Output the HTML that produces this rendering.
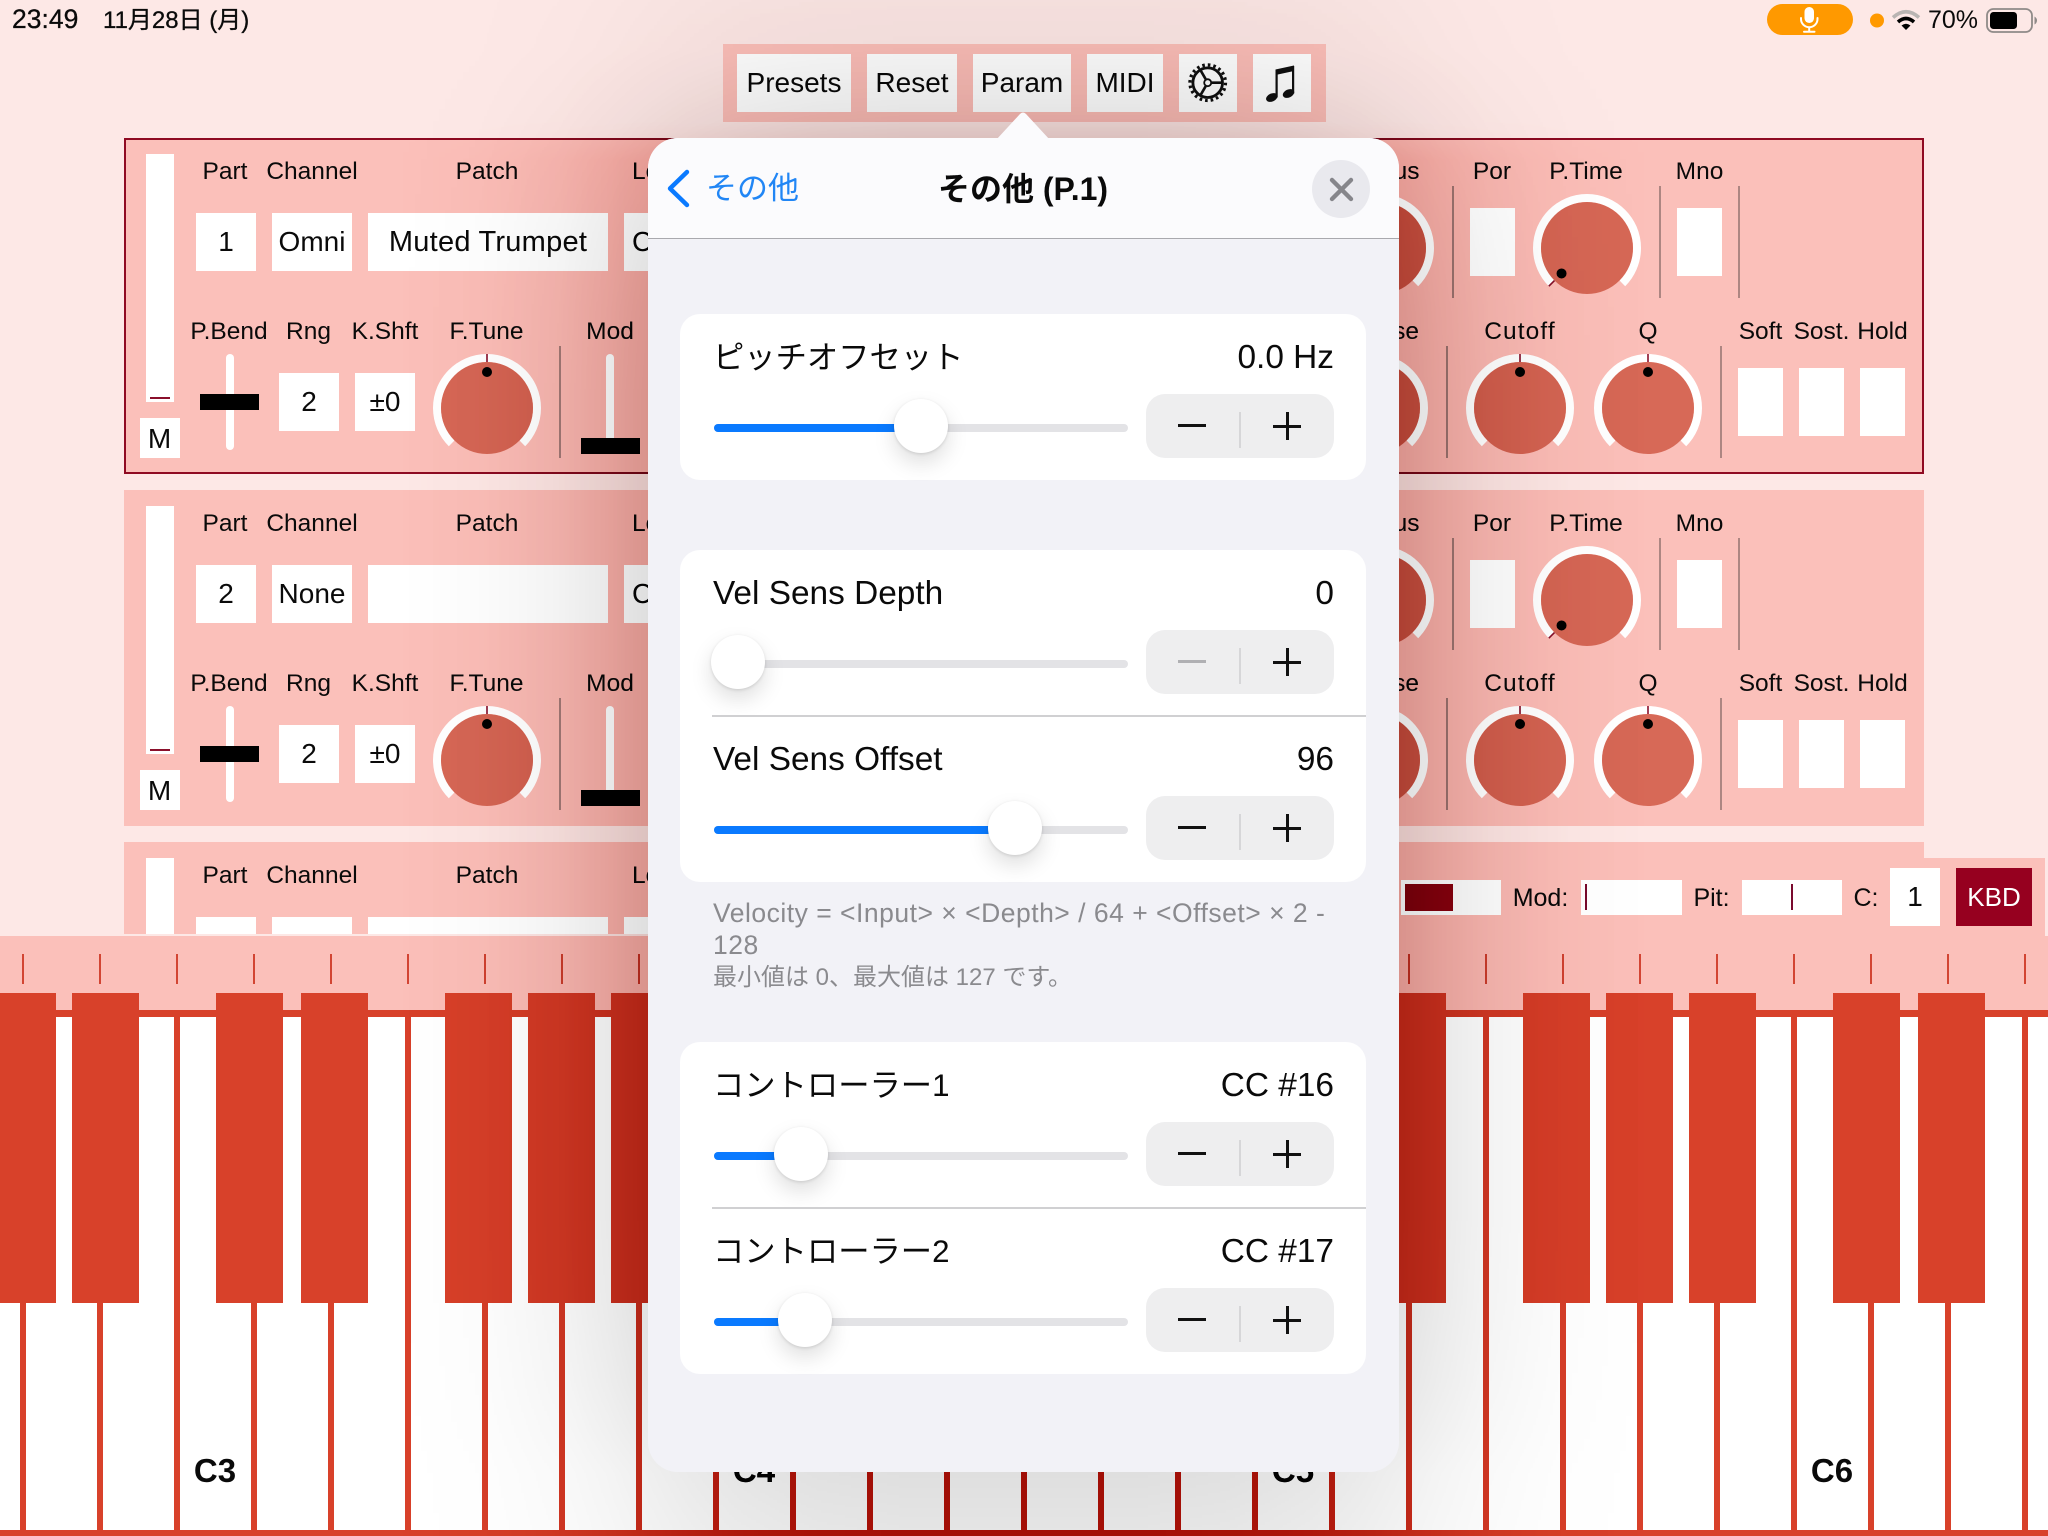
<!DOCTYPE html>
<html lang="ja">
<head>
<meta charset="utf-8">
<title>Param</title>
<style>
html,body{margin:0;padding:0;width:2048px;height:1536px;overflow:hidden;background:#fde8e6}
body{position:relative;font-family:"Liberation Sans","Noto Sans CJK JP",sans-serif;color:#0a0a0a}
div,span,svg{position:absolute;display:block}
.l{font-size:24.5px;line-height:30px;height:30px;white-space:nowrap;transform:translateX(-50%)}
.b{background:#fff;font-size:28px;text-align:center;white-space:nowrap}
.h{background:#fff}
.s{background:#ad8682;width:2px}
.p{left:0;top:0;width:2048px}
.pb{left:124px;top:138px;width:1800px;height:336px;background:#fbc0ba;box-sizing:border-box}
.tb{top:54px;height:58px;line-height:58px;background:#fff;font-size:28px;text-align:center;white-space:nowrap}
.k{top:993px;width:67px;height:310px;background:#d8412a}
.ct{font-size:33.4px;line-height:40px;height:40px;white-space:nowrap;margin-top:1px}
.jp{font-size:31.3px}
.v{right:714px}
.card{left:680px;width:686px;background:#fff;border-radius:20px}
.trk{left:714px;width:414px;height:8px;border-radius:4px;background:#e3e3e6;overflow:hidden}
.fill{left:0;top:0;height:8px;background:#0a7aff}
.th{width:54px;height:54px;border-radius:27px;background:#fff;box-shadow:0 10px 22px rgba(0,0,0,.13),0 1px 3px rgba(0,0,0,.13)}
.st{left:1146px;width:188px;height:64px;border-radius:19px;background:#eeeeef}
.st i{position:absolute;display:block;background:#111}
.d{left:1236px;width:654px}
.f{left:713px;font-size:26.5px;line-height:32px;height:32px;color:#8a8a8e;white-space:nowrap;letter-spacing:.5px}
.sh{left:0;top:0;width:2048px;height:1536px;background:linear-gradient(90deg,rgba(0,0,0,0) 388px,rgba(0,0,0,.06) 478px,rgba(0,0,0,.12) 518px,rgba(0,0,0,.2) 560px,rgba(0,0,0,.35) 608px,rgba(0,0,0,.5) 648px,rgba(0,0,0,.65) 688px,rgba(0,0,0,.8) 736px,rgba(0,0,0,.88) 778px,rgba(0,0,0,.94) 818px,#000 908px,#000 1139px,rgba(0,0,0,.94) 1229px,rgba(0,0,0,.88) 1269px,rgba(0,0,0,.8) 1311px,rgba(0,0,0,.65) 1359px,rgba(0,0,0,.5) 1399px,rgba(0,0,0,.35) 1439px,rgba(0,0,0,.2) 1487px,rgba(0,0,0,.12) 1529px,rgba(0,0,0,.06) 1569px,rgba(0,0,0,0) 1659px)}
.sh1{opacity:.25;-webkit-mask-image:linear-gradient(180deg,rgba(0,0,0,.15) 0,rgba(0,0,0,.2) 50px,rgba(0,0,0,.35) 98px,rgba(0,0,0,.5) 138px,rgba(0,0,0,.65) 178px,rgba(0,0,0,.8) 226px,rgba(0,0,0,.88) 268px,rgba(0,0,0,.94) 308px,#000 398px,#000 1212px,rgba(0,0,0,.94) 1302px,rgba(0,0,0,.88) 1342px,rgba(0,0,0,.8) 1384px,rgba(0,0,0,.65) 1432px,rgba(0,0,0,.5) 1472px,rgba(0,0,0,.4) 1536px);mask-image:linear-gradient(180deg,rgba(0,0,0,.15) 0,rgba(0,0,0,.2) 50px,rgba(0,0,0,.35) 98px,rgba(0,0,0,.5) 138px,rgba(0,0,0,.65) 178px,rgba(0,0,0,.8) 226px,rgba(0,0,0,.88) 268px,rgba(0,0,0,.94) 308px,#000 398px,#000 1212px,rgba(0,0,0,.94) 1302px,rgba(0,0,0,.88) 1342px,rgba(0,0,0,.8) 1384px,rgba(0,0,0,.65) 1432px,rgba(0,0,0,.5) 1472px,rgba(0,0,0,.4) 1536px)}
.sh2{mix-blend-mode:soft-light;-webkit-mask-image:linear-gradient(180deg,rgba(0,0,0,.02) 0,rgba(0,0,0,.05) 44px,rgba(0,0,0,.12) 122px,rgba(0,0,0,.6) 140px,#000 160px,#000 1536px);mask-image:linear-gradient(180deg,rgba(0,0,0,.02) 0,rgba(0,0,0,.05) 44px,rgba(0,0,0,.12) 122px,rgba(0,0,0,.6) 140px,#000 160px,#000 1536px)}
</style>
</head>
<body>

<!-- knob definitions -->
<svg width="0" height="0" style="left:0;top:0">
<defs>
<g id="knob">
<path d="M-35.36 35.36A50 50 0 1 1 35.36 35.36" fill="none" stroke="#fff" stroke-width="8"/>
<circle r="46" fill="#d76957"/>
</g>
<g id="ptr">
<line x1="0" y1="-54" x2="0" y2="-46" stroke="#8a0f2b" stroke-width="1.6"/>
<circle cx="0" cy="-36" r="5" fill="#000"/>
</g>
</defs>
</svg>

<!-- PANEL 1 -->
<div class="p" style="height:500px">
<div class="pb" style="border:2px solid #8f0a22"></div>
<div class="h" style="left:146px;top:154px;width:28px;height:248px"></div>
<div style="left:150px;top:397px;width:20px;height:2px;background:#8a0f2b"></div>
<div class="b" style="left:140px;top:418px;width:40px;height:40px;line-height:42px;text-indent:-1px">M</div>
<div class="l" style="left:225px;top:157px">Part</div>
<div class="l" style="left:312px;top:157px">Channel</div>
<div class="l" style="left:487px;top:157px">Patch</div>
<div class="l" style="left:632px;top:157px;transform:none">Lo</div>
<div class="b" style="left:196px;top:213px;width:60px;height:58px;line-height:58px">1</div>
<div class="b" style="left:272px;top:213px;width:80px;height:58px;line-height:58px">Omni</div>
<div class="b" style="left:368px;top:213px;width:240px;height:58px;line-height:58px;font-size:29px;letter-spacing:.25px">Muted Trumpet</div>
<div class="b" style="left:624px;top:213px;width:60px;height:58px;line-height:58px;text-align:left;text-indent:8px">C</div>
<div class="l" style="left:229px;top:317px">P.Bend</div>
<div class="l" style="left:308.500px;top:317px">Rng</div>
<div class="l" style="left:385px;top:317px">K.Shft</div>
<div class="l" style="left:486.500px;top:317px">F.Tune</div>
<div class="l" style="left:610px;top:317px">Mod</div>
<div class="h" style="left:226px;top:354px;width:8px;height:96px;border-radius:4px"></div>
<div style="left:200px;top:394px;width:59px;height:16px;background:#000"></div>
<div class="b" style="left:279px;top:373px;width:60px;height:58px;line-height:58px">2</div>
<div class="b" style="left:355px;top:373px;width:60px;height:58px;line-height:58px">±0</div>
<div class="s" style="left:559px;top:346px;height:112px"></div>
<div class="h" style="left:606px;top:354px;width:8px;height:96px;border-radius:4px"></div>
<div style="left:581px;top:438px;width:59px;height:16px;background:#000"></div>
<div class="l" style="left:1380px;top:157px">Chorus</div>
<div class="l" style="left:1492px;top:157px">Por</div>
<div class="l" style="left:1586px;top:157px">P.Time</div>
<div class="l" style="left:1699.500px;top:157px">Mno</div>
<div class="s" style="left:1452px;top:186px;height:112px"></div>
<div class="s" style="left:1659px;top:186px;height:112px"></div>
<div class="s" style="left:1738px;top:186px;height:112px"></div>
<div class="h" style="left:1470px;top:208px;width:45px;height:68px"></div>
<div class="h" style="left:1677px;top:208px;width:45px;height:68px"></div>
<div class="l" style="left:1374px;top:317px">Release</div>
<div class="l" style="left:1520px;top:317px;letter-spacing:1.1px">Cutoff</div>
<div class="l" style="left:1648px;top:317px">Q</div>
<div class="l" style="left:1760.500px;top:317px">Soft</div>
<div class="l" style="left:1821.500px;top:317px">Sost.</div>
<div class="l" style="left:1882.500px;top:317px">Hold</div>
<div class="s" style="left:1446px;top:346px;height:112px"></div>
<div class="s" style="left:1720px;top:346px;height:112px"></div>
<div class="h" style="left:1738px;top:368px;width:45px;height:68px"></div>
<div class="h" style="left:1799px;top:368px;width:45px;height:68px"></div>
<div class="h" style="left:1860px;top:368px;width:45px;height:68px"></div>
<svg style="left:0;top:0" width="2048" height="500" viewBox="0 0 2048 500">
<use href="#knob" transform="translate(487 408)"/><use href="#ptr" transform="translate(487 408)"/>
<use href="#knob" transform="translate(1380 248)"/><use href="#ptr" transform="translate(1380 248)"/>
<use href="#knob" transform="translate(1587 248)"/><use href="#ptr" transform="translate(1587 248) rotate(-135)"/>
<use href="#knob" transform="translate(1374 408)"/><use href="#ptr" transform="translate(1374 408)"/>
<use href="#knob" transform="translate(1520 408)"/><use href="#ptr" transform="translate(1520 408)"/>
<use href="#knob" transform="translate(1648 408)"/><use href="#ptr" transform="translate(1648 408)"/>
</svg>
</div>

<!-- PANEL 2 -->
<div class="p" style="top:352px;height:500px">
<div class="pb"></div>
<div class="h" style="left:146px;top:154px;width:28px;height:248px"></div>
<div style="left:150px;top:397px;width:20px;height:2px;background:#8a0f2b"></div>
<div class="b" style="left:140px;top:418px;width:40px;height:40px;line-height:42px;text-indent:-1px">M</div>
<div class="l" style="left:225px;top:157px">Part</div>
<div class="l" style="left:312px;top:157px">Channel</div>
<div class="l" style="left:487px;top:157px">Patch</div>
<div class="l" style="left:632px;top:157px;transform:none">Lo</div>
<div class="b" style="left:196px;top:213px;width:60px;height:58px;line-height:58px">2</div>
<div class="b" style="left:272px;top:213px;width:80px;height:58px;line-height:58px">None</div>
<div class="b" style="left:368px;top:213px;width:240px;height:58px"></div>
<div class="b" style="left:624px;top:213px;width:60px;height:58px;line-height:58px;text-align:left;text-indent:8px">C</div>
<div class="l" style="left:229px;top:317px">P.Bend</div>
<div class="l" style="left:308.500px;top:317px">Rng</div>
<div class="l" style="left:385px;top:317px">K.Shft</div>
<div class="l" style="left:486.500px;top:317px">F.Tune</div>
<div class="l" style="left:610px;top:317px">Mod</div>
<div class="h" style="left:226px;top:354px;width:8px;height:96px;border-radius:4px"></div>
<div style="left:200px;top:394px;width:59px;height:16px;background:#000"></div>
<div class="b" style="left:279px;top:373px;width:60px;height:58px;line-height:58px">2</div>
<div class="b" style="left:355px;top:373px;width:60px;height:58px;line-height:58px">±0</div>
<div class="s" style="left:559px;top:346px;height:112px"></div>
<div class="h" style="left:606px;top:354px;width:8px;height:96px;border-radius:4px"></div>
<div style="left:581px;top:438px;width:59px;height:16px;background:#000"></div>
<div class="l" style="left:1380px;top:157px">Chorus</div>
<div class="l" style="left:1492px;top:157px">Por</div>
<div class="l" style="left:1586px;top:157px">P.Time</div>
<div class="l" style="left:1699.500px;top:157px">Mno</div>
<div class="s" style="left:1452px;top:186px;height:112px"></div>
<div class="s" style="left:1659px;top:186px;height:112px"></div>
<div class="s" style="left:1738px;top:186px;height:112px"></div>
<div class="h" style="left:1470px;top:208px;width:45px;height:68px"></div>
<div class="h" style="left:1677px;top:208px;width:45px;height:68px"></div>
<div class="l" style="left:1374px;top:317px">Release</div>
<div class="l" style="left:1520px;top:317px;letter-spacing:1.1px">Cutoff</div>
<div class="l" style="left:1648px;top:317px">Q</div>
<div class="l" style="left:1760.500px;top:317px">Soft</div>
<div class="l" style="left:1821.500px;top:317px">Sost.</div>
<div class="l" style="left:1882.500px;top:317px">Hold</div>
<div class="s" style="left:1446px;top:346px;height:112px"></div>
<div class="s" style="left:1720px;top:346px;height:112px"></div>
<div class="h" style="left:1738px;top:368px;width:45px;height:68px"></div>
<div class="h" style="left:1799px;top:368px;width:45px;height:68px"></div>
<div class="h" style="left:1860px;top:368px;width:45px;height:68px"></div>
<svg style="left:0;top:0" width="2048" height="500" viewBox="0 0 2048 500">
<use href="#knob" transform="translate(487 408)"/><use href="#ptr" transform="translate(487 408)"/>
<use href="#knob" transform="translate(1380 248)"/><use href="#ptr" transform="translate(1380 248)"/>
<use href="#knob" transform="translate(1587 248)"/><use href="#ptr" transform="translate(1587 248) rotate(-135)"/>
<use href="#knob" transform="translate(1374 408)"/><use href="#ptr" transform="translate(1374 408)"/>
<use href="#knob" transform="translate(1520 408)"/><use href="#ptr" transform="translate(1520 408)"/>
<use href="#knob" transform="translate(1648 408)"/><use href="#ptr" transform="translate(1648 408)"/>
</svg>
</div>

<!-- PANEL 3 (clipped) -->
<div class="p" style="top:704px;height:230px;overflow:hidden">
<div class="pb"></div>
<div class="h" style="left:146px;top:154px;width:28px;height:100px"></div>
<div class="l" style="left:225px;top:157px">Part</div>
<div class="l" style="left:312px;top:157px">Channel</div>
<div class="l" style="left:487px;top:157px">Patch</div>
<div class="l" style="left:632px;top:157px;transform:none">Lo</div>
<div class="b" style="left:196px;top:213px;width:60px;height:58px"></div>
<div class="b" style="left:272px;top:213px;width:80px;height:58px"></div>
<div class="b" style="left:368px;top:213px;width:240px;height:58px"></div>
<div class="b" style="left:624px;top:213px;width:60px;height:58px"></div>
</div>

<!-- MIDI bar -->
<div style="left:1300px;top:858px;width:745px;height:78px;background:#fbc0ba"></div>
<div style="left:1401px;top:880px;width:100px;height:35px;background:#fff"></div>
<div style="left:1405px;top:883.500px;width:47.500px;height:27.500px;background:#9a0014"></div>
<div class="l" style="left:1540.500px;top:883px;font-size:25px">Mod:</div>
<div style="left:1581px;top:880px;width:101px;height:35px;background:#fff"></div>
<div style="left:1584.500px;top:884px;width:2px;height:26px;background:#7a0a2e"></div>
<div class="l" style="left:1711.500px;top:883px;font-size:25px">Pit:</div>
<div style="left:1742px;top:880px;width:100px;height:35px;background:#fff"></div>
<div style="left:1791px;top:884px;width:2px;height:26px;background:#7a0a2e"></div>
<div class="l" style="left:1866px;top:883px;font-size:25px">C:</div>
<div class="b" style="left:1890px;top:868px;width:50px;height:58px;line-height:58px">1</div>
<div style="left:1956px;top:868px;width:76px;height:58px;line-height:58px;background:#96001f;color:#fff;font-size:26px;text-align:center">KBD</div>

<!-- KEYBOARD -->
<div style="left:0;top:936px;width:2048px;height:74px;background:#fbc0ba"></div>
<div style="left:0;top:954px;width:2048px;height:30px;background:repeating-linear-gradient(90deg,transparent 0,transparent 22px,#d24533 22px,#d24533 24px,transparent 24px,transparent 77px)"></div>
<div style="left:0;top:1010px;width:2048px;height:7px;background:#d8412a"></div>
<div style="left:0;top:1017px;width:2048px;height:513px;background:#fff"></div>
<div style="left:0;top:1017px;width:2048px;height:513px;background:repeating-linear-gradient(90deg,transparent 0,transparent 20px,#d8412a 20px,#d8412a 26px,transparent 26px,transparent 77px)"></div>
<div style="left:0;top:1530px;width:2048px;height:6px;background:#d8412a"></div>
<div class="k" style="left:-11px"></div>
<div class="k" style="left:72px"></div>
<div class="k" style="left:216px"></div>
<div class="k" style="left:301px"></div>
<div class="k" style="left:445px"></div>
<div class="k" style="left:528px"></div>
<div class="k" style="left:611px"></div>
<div class="k" style="left:755px"></div>
<div class="k" style="left:840px"></div>
<div class="k" style="left:984px"></div>
<div class="k" style="left:1067px"></div>
<div class="k" style="left:1150px"></div>
<div class="k" style="left:1294px"></div>
<div class="k" style="left:1379px"></div>
<div class="k" style="left:1523px"></div>
<div class="k" style="left:1606px"></div>
<div class="k" style="left:1689px"></div>
<div class="k" style="left:1833px"></div>
<div class="k" style="left:1918px"></div>
<div style="left:215px;top:1451px;transform:translateX(-50%);font-size:33px;font-weight:bold;line-height:40px">C3</div>
<div style="left:754px;top:1451px;transform:translateX(-50%);font-size:33px;font-weight:bold;line-height:40px">C4</div>
<div style="left:1293px;top:1451px;transform:translateX(-50%);font-size:33px;font-weight:bold;line-height:40px">C5</div>
<div style="left:1832px;top:1451px;transform:translateX(-50%);font-size:33px;font-weight:bold;line-height:40px">C6</div>

<!-- TOOLBAR -->
<div style="left:723px;top:44px;width:603px;height:78px;background:#fbc0ba"></div>
<div class="tb" style="left:737px;width:114px">Presets</div>
<div class="tb" style="left:867px;width:90px">Reset</div>
<div class="tb" style="left:973px;width:98px">Param</div>
<div class="tb" style="left:1087px;width:76px">MIDI</div>
<div class="tb" style="left:1179px;width:58px"></div>
<div class="tb" style="left:1253px;width:58px"></div>

<!-- toolbar icons -->
<svg style="left:0;top:0" width="2048" height="140" viewBox="0 0 2048 140">
<g transform="translate(1207.7 82.7)" fill="none" stroke="#111">
<circle r="17.800" stroke-width="3.200" stroke-dasharray="2.600 2.990"/>
<circle r="14.800" stroke-width="2.800"/>
<path d="M4 0H14M-2 3.500L-7.500 13M-2 -3.500L-7.500 -13" stroke-width="2.600"/>
<circle r="3.500" stroke-width="1.800"/>
</g>
<g fill="#111">
<path d="M1275.500 69.500L1294 65.500V71L1275.500 75Z"/>
<rect x="1275.500" y="70" width="2.200" height="27.500"/>
<rect x="1292" y="66" width="2.200" height="27.500"/>
<ellipse cx="1271.800" cy="97.500" rx="6" ry="4" transform="rotate(-25 1271.800 97.500)"/>
<ellipse cx="1288.500" cy="93.500" rx="6" ry="4" transform="rotate(-25 1288.500 93.500)"/>
</g>
</svg>

<!-- MODAL SHADOW (separable gradient layers) -->
<div class="sh sh2"></div>
<div class="sh sh1"></div>

<!-- MODAL -->
<svg style="left:990px;top:108px" width="68" height="34" viewBox="0 0 68 34"><path d="M6 32L30 6Q33 3 36 6L60 32Z" fill="#fbfbfd"/></svg>
<div style="left:648px;top:138px;width:751px;height:1334px;border-radius:30px;background:#f2f2f7;overflow:hidden">
<div style="left:0;top:0;width:751px;height:100px;background:#fbfbfd"></div>
<div style="left:0;top:99.500px;width:751px;height:1.500px;background:#a9a9ae"></div>
</div>
<svg style="left:660px;top:160px" width="40" height="56" viewBox="660 160 40 56"><path d="M687 172L670 188.500L687 205" fill="none" stroke="#0a7aff" stroke-width="4.400" stroke-linecap="round" stroke-linejoin="round"/></svg>
<div style="left:706px;top:167px;font-size:31px;line-height:44px;color:#2186f5;white-space:nowrap">その他</div>
<div style="left:1023px;top:167px;transform:translateX(-50%);font-size:32px;line-height:44px;font-weight:bold;white-space:nowrap">その他 (P.1)</div>
<div style="left:1312px;top:160px;width:58px;height:58px;border-radius:29px;background:#e9e9ee"></div>
<svg style="left:1312px;top:160px" width="58" height="58" viewBox="1312 160 58 58"><path d="M1332 180L1351 199M1351 180L1332 199" fill="none" stroke="#86868b" stroke-width="4.400" stroke-linecap="round"/></svg>

<!-- card 1 -->
<div class="card" style="top:314px;height:166px"></div>
<div class="ct jp" style="left:713px;top:337px">ピッチオフセット</div>
<div class="ct v" style="top:337px">0.0 Hz</div>
<div class="trk" style="top:424px"><div class="fill" style="width:207px"></div></div>
<div class="th" style="left:894px;top:399px"></div>
<div class="st" style="top:394px"><i style="left:32px;top:30px;width:28px;height:3px"></i><i style="left:93px;top:18px;width:2px;height:36px;background:#d6d6d8"></i><i style="left:127px;top:30.500px;width:28px;height:3px"></i><i style="left:140px;top:18px;width:3px;height:28px"></i></div>

<!-- card 2 -->
<div class="card" style="top:550px;height:332px"></div>
<div class="ct" style="left:713px;top:573px">Vel Sens Depth</div>
<div class="ct v" style="top:573px">0</div>
<div class="trk" style="top:660px"></div>
<div class="th" style="left:711px;top:635px"></div>
<div class="st" style="top:630px"><i style="left:32px;top:30px;width:28px;height:3px;background:#b0b0b3"></i><i style="left:93px;top:18px;width:2px;height:36px;background:#d6d6d8"></i><i style="left:127px;top:30.500px;width:28px;height:3px"></i><i style="left:140px;top:18px;width:3px;height:28px"></i></div>
<div class="d" style="left:712px;top:715px;height:1.500px;background:#d0d0d2"></div>
<div class="ct" style="left:713px;top:739px">Vel Sens Offset</div>
<div class="ct v" style="top:739px">96</div>
<div class="trk" style="top:826px"><div class="fill" style="width:301px"></div></div>
<div class="th" style="left:988px;top:801px"></div>
<div class="st" style="top:796px"><i style="left:32px;top:30px;width:28px;height:3px"></i><i style="left:93px;top:18px;width:2px;height:36px;background:#d6d6d8"></i><i style="left:127px;top:30.500px;width:28px;height:3px"></i><i style="left:140px;top:18px;width:3px;height:28px"></i></div>

<!-- footer -->
<div class="f" style="top:897px">Velocity = &lt;Input&gt; × &lt;Depth&gt; / 64 + &lt;Offset&gt; × 2 -</div>
<div class="f" style="top:929px">128</div>
<div class="f" style="top:962px;font-size:24px;letter-spacing:0;word-spacing:0">最小値は 0、最大値は 127 です。</div>

<!-- card 3 -->
<div class="card" style="top:1042px;height:332px"></div>
<div class="ct jp" style="left:713px;top:1065px">コントローラー1</div>
<div class="ct v" style="top:1065px">CC #16</div>
<div class="trk" style="top:1152px"><div class="fill" style="width:87px"></div></div>
<div class="th" style="left:774px;top:1127px"></div>
<div class="st" style="top:1122px"><i style="left:32px;top:30px;width:28px;height:3px"></i><i style="left:93px;top:18px;width:2px;height:36px;background:#d6d6d8"></i><i style="left:127px;top:30.500px;width:28px;height:3px"></i><i style="left:140px;top:18px;width:3px;height:28px"></i></div>
<div class="d" style="left:712px;top:1207px;height:1.500px;background:#d0d0d2"></div>
<div class="ct jp" style="left:713px;top:1231px">コントローラー2</div>
<div class="ct v" style="top:1231px">CC #17</div>
<div class="trk" style="top:1318px"><div class="fill" style="width:90px"></div></div>
<div class="th" style="left:778px;top:1293px"></div>
<div class="st" style="top:1288px"><i style="left:32px;top:30px;width:28px;height:3px"></i><i style="left:93px;top:18px;width:2px;height:36px;background:#d6d6d8"></i><i style="left:127px;top:30.500px;width:28px;height:3px"></i><i style="left:140px;top:18px;width:3px;height:28px"></i></div>

<!-- STATUS BAR -->
<div style="left:12px;top:4px;font-size:26.500px;line-height:30px;white-space:nowrap;-webkit-text-stroke:.3px #111">23:49</div>
<div style="left:103px;top:6px;font-size:24px;line-height:30px;white-space:nowrap;-webkit-text-stroke:.3px #111">11月28日 (月)</div>
<div style="left:1767px;top:4px;width:86px;height:31px;border-radius:15.500px;background:#ff9900"></div>
<svg style="left:0;top:0" width="2048" height="40" viewBox="0 0 2048 40">
<rect x="1804.500" y="7" width="9.500" height="16" rx="4.750" fill="#fff"/>
<path d="M1801 18V19A8.200 8.200 0 0 0 1817.500 19V18M1809.200 27.500V31M1804 31.800H1814.500" fill="none" stroke="#fff" stroke-width="2" stroke-linecap="round"/>
<circle cx="1877" cy="20.500" r="7" fill="#ff9900"/>
<path d="M1893 17.500Q1906 6 1919 17.500" fill="none" stroke="#b9b4b2" stroke-width="3.600"/>
<path d="M1898 22Q1906 15 1914 22" fill="none" stroke="#000" stroke-width="3.600"/>
<path d="M1901.500 25.500Q1906 22 1910.500 25.500L1906 30Z" fill="#000"/>
<rect x="1987" y="9" width="45" height="23" rx="6.500" fill="none" stroke="#8f8a88" stroke-width="1.800"/>
<rect x="1990" y="12" width="27" height="17" rx="3.500" fill="#000"/>
<path d="M2034.500 16.500Q2037 18 2037 20.500Q2037 23 2034.500 24.500Z" fill="#8f8a88"/>
</svg>
<div style="left:1928px;top:5px;font-size:25px;line-height:30px;white-space:nowrap">70%</div>

</body>
</html>
